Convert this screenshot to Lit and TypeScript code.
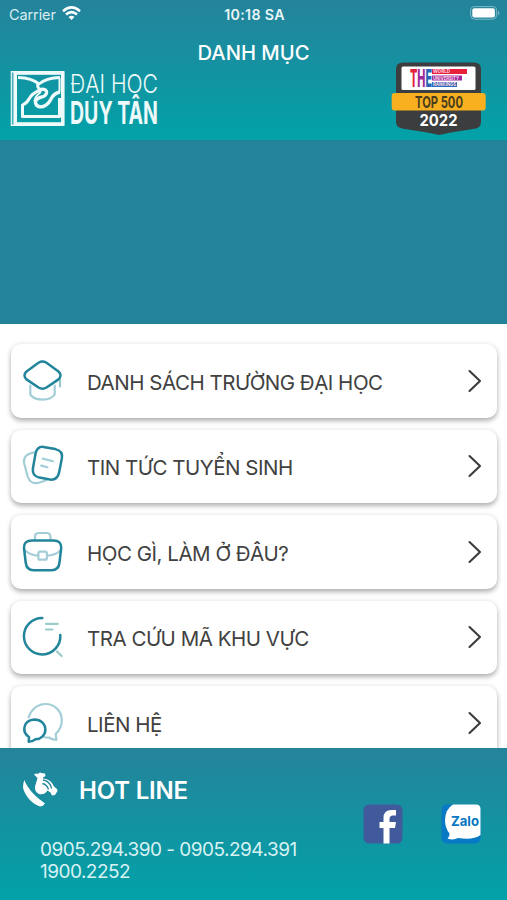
import { LitElement, html, css, svg } from "lit";
import { customElement, property } from "lit/decorators.js";

const icons: Record<string, unknown> = {
  cap: svg`
    <g class="light"><path d="M7.300 24.500V33.500C9.500 36.600 14 38.600 19.500 38.600S29.600 36.600 31.700 33.500V24.500"/><path class="green" d="M37 18V25.500"/></g>
    <path class="dark" d="M15.500 1.800Q19.500 -.6 23.500 1.800L35.500 10.500Q39.500 14.500 35.500 18.400L23.500 26.500Q19.500 29 15.500 26.500L3.500 18.400Q-.5 14.500 3.500 10.500Z"/>`,
  docs: svg`
    <path class="light" d="M11.500 6.200L7.500 7.400Q-.4 9.800 1.200 17.500L4.700 30.500Q7.200 38.400 15 37L23.500 34.300"/>
    <path class="dark" d="M20.300 .9L32.300 3.100Q40 4.800 38.900 12L36.100 26.500Q34.500 34.300 27 33.600L16.300 31.600Q9 30 9.900 22.500L12.500 7.700Q14.200 .3 20.300 .9Z"/>
    <path class="light" d="M19.800 12.600L30 15.300M18.200 19.600L24.400 21.200"/>`,
  bag: svg`
    <path class="light" d="M12 7V5Q12 1 16 1H23.500Q27.500 1 27.500 5V7M2 18.500Q8 23.500 15.300 23.700M24 23.700Q32 23.500 37.500 18.500"/>
    <rect class="light" x="15.300" y="19.700" width="8.600" height="8" rx="1.800"/>
    <path class="dark" d="M9 8.500H30.500Q38.500 8.500 38.200 16L36.500 30.500Q35.700 38.300 28.500 38.300H10.500Q3.600 38.300 2.700 30.500L1 16Q.6 8.500 9 8.500Z"/>`,
  search: svg`
    <path class="dark" d="M19.300 1A18.200 18.200 0 1 0 37.300 18"/>
    <path class="light green" d="M23 6.800H34.800M23 12.500H29.500M34 34.500L38.600 39"/>`,
  chat: svg`
    <path class="light" d="M5.600 14.500C8 6.500 14.600 1 22.500 1C31.500 1 38.800 8 38.800 17C38.800 22.500 36.500 27.500 32.700 31L33.400 37Q28.500 36.300 26 34.500Q23.500 34.700 21.500 34.200"/>
    <path class="dark" d="M11.500 16.500C17.600 16.500 22.400 20.700 22.400 26.500S17.500 36.500 12.500 36.300Q9.500 38.700 5.700 38.800L6 34C-1.800 29 .3 17 11.500 16.500Z"/>`,
};

@customElement("menu-row")
class MenuRow extends LitElement {
  @property() icon = "";
  @property() label = "";
  static styles = css`
    :host {
      display: flex;
      align-items: center;
      box-sizing: border-box;
      height: 73.5px;
      padding: 0 15px 0 12px;
      background: #fff;
      border-radius: 10px;
      box-shadow: 0 3px 5px rgba(0, 0, 0, 0.28), 0 0 6px rgba(0, 0, 0, 0.08);
      flex: none;
    }
    svg { fill: none; stroke-linecap: round; stroke-linejoin: round; overflow: visible; flex: none; }
    .pic { width: 40px; height: 40px; }
    .dark { stroke: #22859b; stroke-width: 2.5; }
    .light { stroke: #a3ced7; stroke-width: 2.2; }
    .green { stroke: #9bcbc8; }
    .label {
      flex: 1;
      margin-left: 24.5px;
      padding-top: 4px;
      font: 400 20.5px/26px Inter, sans-serif;
      letter-spacing: -0.48px;
      color: #414141;
      white-space: nowrap;
    }
    .arrow { width: 14px; height: 24px; stroke: #3c3c3c; stroke-width: 2.1; }
  `;
  render() {
    return html`
      <svg class="pic" viewBox="0 0 40 40">${icons[this.icon]}</svg>
      <span class="label">${this.label}</span>
      <svg class="arrow" viewBox="0 0 14 24"><path d="M1.500 2L12 12L1.500 22" /></svg>
    `;
  }
}

const rows = [
  ["cap", "DANH SÁCH TRƯỜNG ĐẠI HỌC"],
  ["docs", "TIN TỨC TUYỂN SINH"],
  ["bag", "HỌC GÌ, LÀM Ở ĐÂU?"],
  ["search", "TRA CỨU MÃ KHU VỰC"],
  ["chat", "LIÊN HỆ"],
];

@customElement("app-root")
class AppRoot extends LitElement {
  static styles = css`
    :host {
      display: flex;
      flex-direction: column;
      height: 900px;
      overflow: hidden;
      background: #fff;
      color: #fff;
      font-family: Inter, sans-serif;
    }
    header {
      height: 140px;
      flex: none;
      background: linear-gradient(#25839b, #02a2a8);
    }
    .status {
      display: grid;
      grid-template-columns: 1fr auto 1fr;
      align-items: center;
      height: 28px;
      padding: 0 7px 0 9px;
      font-size: 14.5px;
    }
    .carrier { display: flex; align-items: center; gap: 6px; color: #d9edf1; letter-spacing: -0.1px; }
    .carrier svg { margin-top: -2px; }
    .time { font-weight: 600; font-size: 14.2px; letter-spacing: 0.35px; color: #e9f6f8; }
    .battery { justify-self: end; margin-top: -2px; }
    .title {
      height: 34px;
      font-size: 20.2px;
      font-weight: 500;
      line-height: 49px;
      text-align: center;
    }
    .brands { display: flex; justify-content: space-between; padding: 0 20px 0 10px; }
    .logo { margin-top: 8px; overflow: visible; }
    svg { display: block; flex: none; }
    .banner { height: 184px; flex: none; background: #22839b; }
    main {
      height: 424px;
      flex: none;
      box-sizing: border-box;
      padding: 20px 10px 0 10.5px;
      display: flex;
      flex-direction: column;
      gap: 12px;
      overflow: hidden;
    }
    footer {
      height: 152px;
      flex: none;
      display: flex;
      justify-content: space-between;
      background: linear-gradient(#25839b, #02a2a8);
    }
    .hot { display: flex; align-items: center; padding: 23px 0 0 22px; gap: 20px; height: 38px; }
    .hot b { font-size: 24px; font-weight: 600; letter-spacing: -0.2px; }
    .phones { margin: 30px 0 0 40px; font-size: 19px; line-height: 21.5px; letter-spacing: -0.52px; color: #d8f2f3; white-space: nowrap; }
    .social { display: flex; gap: 38px; padding: 56px 26px 0 0; }
  `;
  render() {
    return html`
      <header>
        <div class="status">
          <div class="carrier">
            <span>Carrier</span>
            <svg width="19" height="14" viewBox="0 0 19 14" fill="none" stroke="#fff" stroke-width="2.500">
              <path d="M1 5.200Q9.500 -2.400 18 5.200M4 8.500Q9.500 3.800 15 8.500" />
              <path d="M6.500 11Q9.500 8.500 12.500 11L9.500 13.900Z" fill="#fff" stroke="none" />
            </svg>
          </div>
          <span class="time">10:18 SA</span>
          <svg class="battery" width="30" height="14" viewBox="0 0 30 14">
            <rect x=".6" y=".6" width="26" height="12.600" rx="4" fill="none" stroke="#7fb7c5" />
            <rect x="2.300" y="2.300" width="22.600" height="9.200" rx="2" fill="#fff" />
            <path d="M28 4.700Q31 7 28 9.300Z" fill="#7fb7c5" />
          </svg>
        </div>
        <div class="title">DANH MỤC</div>
        <div class="brands">
          <svg class="logo" width="150" height="57" viewBox="0 0 150 57">
            <path d="M1.500 1V56" stroke="#d5f0f1" stroke-width="1.600" />
            <path d="M1 1.800H54M1 55.200H54" stroke="#effafa" stroke-width="1.600" />
            <rect x="5.200" y="3" width="47.600" height="51" fill="none" stroke="#effafa" stroke-width="3.600" />
            <g fill="none" stroke="#effafa" stroke-width="3.400" stroke-linejoin="round">
              <path d="M8 7.500Q22 8 29 14Q36 8 50 7.500" stroke-width="2.800" />
              <path d="M28.500 12Q26 18 31 20Q22 23 19 29Q17 33 12.500 35V46.500H49.500V28" stroke-width="3" />
              <path d="M28 20Q37 17.500 36.500 23Q36 26.500 30 27.500Q25 29 25.500 33Q27 38 33 36.500Q38 35 41 29Q44 23 50 22" />
              <path d="M31 22Q25 26 24.500 31" stroke-width="2" />
              <path d="M49.500 8V22" stroke-width="2" />
            </g>
            <g fill="#eefafa" font-family="Inter, sans-serif">
              <text x="60" y="22.700" font-size="25" font-weight="300" textLength="88" lengthAdjust="spacingAndGlyphs">ĐẠI HỌC</text>
              <text x="60" y="53.500" font-size="31" font-weight="700" textLength="88" lengthAdjust="spacingAndGlyphs">DUY TÂN</text>
            </g>
          </svg>
          <svg width="96" height="74" viewBox="0 0 96 74">
            <path d="M5 7Q5 .5 12 .5H83Q90 .5 90 7V60Q90 65 85 66.500L60 70.500Q52 72 48 73Q43 71.500 36 70.500L11 66.500Q5 65 5 60Z" fill="#3c3d3e" />
            <rect x="10.500" y="4.500" width="74" height="23.500" rx="1.500" fill="#fff" />
            <path d="M41 7H76V12H41Z" fill="#e8203b" />
            <path d="M41 13.500H71V18.500H41Z" fill="#9d2a9e" />
            <path d="M41 20H66V25H41Z" fill="#2c6cb8" />
            <g font-family="Inter, sans-serif" font-weight="700">
              <text x="19" y="25" font-size="24.500" font-weight="800" textLength="22" lengthAdjust="spacingAndGlyphs"><tspan fill="#e3213d">T</tspan><tspan fill="#9b2a9c">H</tspan><tspan fill="#2b64b5">E</tspan></text>
              <g font-size="5" fill="#fbd5e4">
                <text x="42" y="11.400" textLength="17" lengthAdjust="spacingAndGlyphs">WORLD</text>
                <text x="42" y="17.900" textLength="26" lengthAdjust="spacingAndGlyphs">UNIVERSITY</text>
                <text x="42" y="24.400" textLength="23" lengthAdjust="spacingAndGlyphs">RANKINGS</text>
              </g>
              <rect x=".7" y="31" width="94" height="17.500" rx="3" fill="#f8b020" />
              <text x="24" y="45.700" font-size="16.500" fill="#4a3c1e" textLength="48" lengthAdjust="spacingAndGlyphs">TOP 500</text>
              <text x="28.500" y="64" font-size="16.500" fill="#fff" textLength="38" lengthAdjust="spacingAndGlyphs">2022</text>
            </g>
          </svg>
        </div>
      </header>
      <div class="banner"></div>
      <main>${rows.map(([icon, label]) => html`<menu-row .icon=${icon} .label=${label}></menu-row>`)}</main>
      <footer>
        <div>
          <div class="hot">
            <svg width="37" height="37" viewBox="0 0 37 37" fill="#fff">
              <path d="M2.500 8Q3 11 6 15Q11 23 23 31.500Q21 34.500 18 34.500Q12 32.500 7 27Q2 21 1 15.500Q.8 11 2.500 8Z" />
              <path d="M12 2.500L14 1.500Q16 2.500 18 .5Q20 1.500 23 1.500L23.500 4L21 5.500V6.500Q29 7 32 14.500L35 17L35.500 19L33 23L30 23.500L28.500 20.500L25.500 18.500Q22 23.500 17 22Q12.500 20 13 14.500L14.500 9.500L15.500 6Z" />
              <path d="M21 8Q28 9 29.500 16.500M20.500 11.500Q25 12.500 26.500 17.500" fill="none" stroke="#23869d" stroke-width="1.300" />
            </svg>
            <b>HOT LINE</b>
          </div>
          <div class="phones">0905.294.390 - 0905.294.391<br />1900.2252</div>
        </div>
        <div class="social">
          <svg width="40" height="40" viewBox="0 0 40 40">
            <rect x=".5" y=".5" width="39" height="39" rx="5.500" fill="#405a9c" />
            <path d="M20.500 39.500V24H16.500V18H20.500V14Q20.500 6 28.500 6H33V11.500H30Q26.500 11.500 26.500 15V18H33L32 24H26.500V39.500Z" fill="#fff" />
          </svg>
          <svg width="40" height="40" viewBox="0 0 40 40">
            <rect x=".5" y=".5" width="39" height="39" rx="5" fill="#0879c5" />
            <path d="M12 .5H35Q39.500 .5 39.500 5V31Q32 36.500 17 34Q12 36.500 6.500 34.500Q9 32.500 8.500 29.500Q4 24 4 16Q4.500 5 12 .5Z" fill="#fff" />
            <text x="10" y="21.500" font-family="Inter, sans-serif" font-size="13.500" font-weight="700" fill="#0876c2" textLength="28" lengthAdjust="spacingAndGlyphs">Zalo</text>
          </svg>
        </div>
      </footer>
    `;
  }
}
